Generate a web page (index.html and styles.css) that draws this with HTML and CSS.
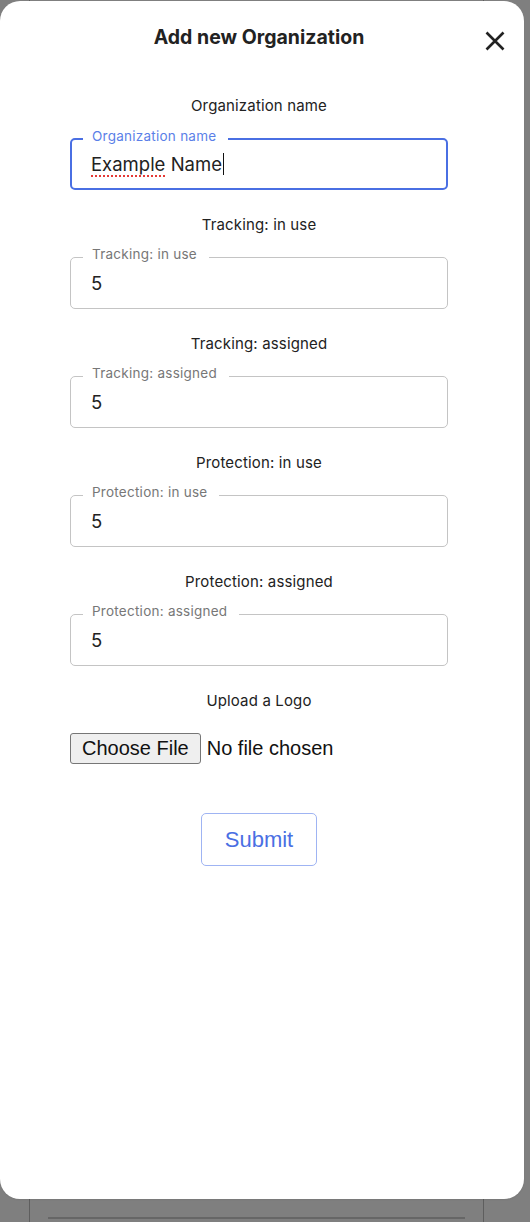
FILE: index.html
```html
<!DOCTYPE html>
<html lang="en">
<head>
<meta charset="utf-8">
<title>Add new Organization</title>
<link rel="stylesheet" href="styles.css">
</head>
<body>
<div class="backdrop-card">
  <div class="backdrop-divider"></div>
</div>
<div class="modal" role="dialog" aria-labelledby="modal-title">
  <div class="modal-header">
    <h2 class="modal-title" id="modal-title">Add new Organization</h2>
    <button class="close-btn" type="button" aria-label="Close">
      <svg width="20" height="20" viewBox="0 0 20 20" aria-hidden="true">
        <path d="M1.5 1.5 L18.5 18.5 M18.5 1.5 L1.5 18.5" stroke="#222" stroke-width="2.6" stroke-linecap="butt" fill="none"/>
      </svg>
    </button>
  </div>
  <form class="org-form">
    <div class="form-section">
      <p class="section-label">Organization name</p>
      <div class="field field-focused">
        <span class="field-label">Organization name</span>
        <div class="field-value"><span class="misspelled">Example</span> Name<span class="caret"></span></div>
      </div>
    </div>
    <div class="form-section">
      <p class="section-label">Tracking: in use</p>
      <div class="field">
        <span class="field-label">Tracking: in use</span>
        <input class="field-input" type="text" value="5">
      </div>
    </div>
    <div class="form-section">
      <p class="section-label">Tracking: assigned</p>
      <div class="field">
        <span class="field-label">Tracking: assigned</span>
        <input class="field-input" type="text" value="5">
      </div>
    </div>
    <div class="form-section">
      <p class="section-label">Protection: in use</p>
      <div class="field">
        <span class="field-label">Protection: in use</span>
        <input class="field-input" type="text" value="5">
      </div>
    </div>
    <div class="form-section">
      <p class="section-label">Protection: assigned</p>
      <div class="field">
        <span class="field-label">Protection: assigned</span>
        <input class="field-input" type="text" value="5">
      </div>
    </div>
    <div class="upload-section">
      <p class="section-label">Upload a Logo</p>
      <div class="file-row">
        <button class="file-btn" type="button">Choose File</button>
        <span class="file-status">No file chosen</span>
      </div>
    </div>
    <div class="submit-row">
      <button class="submit-btn" type="button">Submit</button>
    </div>
  </form>
</div>
</body>
</html>
```
FILE: styles.css
```css
* {
  box-sizing: border-box;
}

html, body {
  margin: 0;
  padding: 0;
}

body {
  width: 530px;
  height: 1222px;
  overflow: hidden;
  background: #7f7f7f;
  position: relative;
  font-family: Inter, "Noto Sans", sans-serif;
  color: #222;
}

.backdrop-card {
  margin-left: 29px;
  width: 455px;
  height: 1222px;
  border-left: 1px solid #5e5e5e;
  border-right: 1px solid #5e5e5e;
  padding-top: 1217px;
}

.backdrop-divider {
  margin: 0 18px;
  height: 2px;
  background: #666;
}

.modal {
  position: absolute;
  left: 0;
  top: 1px;
  width: 524px;
  height: 1198px;
  background: #fff;
  border-radius: 20px;
  box-shadow: 0 1px 2px rgba(0, 0, 0, 0.06);
}

.modal-header {
  display: grid;
  grid-template-columns: 70px 378px 1fr;
  align-items: center;
  padding-top: 21px;
}

.modal-title {
  grid-column: 2;
  margin: 0;
  text-align: center;
  font-size: 19.5px;
  font-weight: 700;
  line-height: 24px;
  color: #222;
}

.close-btn {
  grid-column: 3;
  justify-self: start;
  margin-left: 36px;
  margin-top: 8px;
  width: 22px;
  height: 22px;
  padding: 1px;
  border: 0;
  background: transparent;
  display: flex;
  align-items: center;
  justify-content: center;
}

.org-form {
  margin-left: 70px;
  width: 378px;
  padding-top: 44px;
  display: flex;
  flex-direction: column;
}

.form-section {
  display: flex;
  flex-direction: column;
  gap: 22px;
  padding-bottom: 25px;
}

.section-label {
  margin: 0;
  text-align: center;
  font-size: 15px;
  line-height: 20px;
  letter-spacing: 0.15px;
  color: #222;
}

.field {
  position: relative;
  height: 52px;
  border: 1px solid #c4c4c4;
  border-radius: 5px;
  display: flex;
  align-items: center;
  padding: 0 20px;
}

.field-focused {
  border: 2px solid #4a6fe3;
  padding: 0 19px;
}

.field-label {
  position: absolute;
  top: -12px;
  left: 12px;
  padding: 0 12px 0 9px;
  background: #fff;
  font-size: 13.5px;
  letter-spacing: 0.25px;
  line-height: 16px;
  color: #777;
  white-space: nowrap;
}

.field-focused .field-label {
  top: -12px;
  left: 11px;
  color: #5b7fe8;
}

.field-input,
.field-value {
  width: 100%;
  border: 0;
  outline: none;
  padding: 0;
  margin: 0;
  background: transparent;
  font-family: Inter, "Noto Sans", sans-serif;
  font-size: 18.5px;
  line-height: 24px;
  color: #222;
}

.field-value {
  display: flex;
  align-items: center;
  white-space: pre;
}

.misspelled {
  text-decoration: underline dotted #e53935;
  text-decoration-thickness: 2px;
  text-underline-offset: 4px;
}

.caret {
  display: inline-block;
  width: 1px;
  height: 22px;
  background: #111;
  margin-left: 1px;
}

.upload-section {
  display: flex;
  flex-direction: column;
  gap: 22px;
}

.file-row {
  display: flex;
  align-items: center;
  height: 31px;
}

.file-btn {
  height: 31px;
  padding: 0 11px;
  border: 1px solid #767676;
  border-radius: 3px;
  background: #efefef;
  font-family: "Liberation Sans", Arial, sans-serif;
  font-size: 20px;
  color: #111;
}

.file-status {
  margin-left: 6px;
  font-family: "Liberation Sans", Arial, sans-serif;
  font-size: 20px;
  color: #111;
}

.submit-row {
  display: flex;
  justify-content: center;
  padding-top: 49px;
}

.submit-btn {
  width: 116px;
  height: 53px;
  border: 1px solid #9fb4f3;
  border-radius: 5px;
  background: #fff;
  font-family: "Liberation Sans", Arial, sans-serif;
  font-size: 22px;
  color: #4a6fe3;
}
```
